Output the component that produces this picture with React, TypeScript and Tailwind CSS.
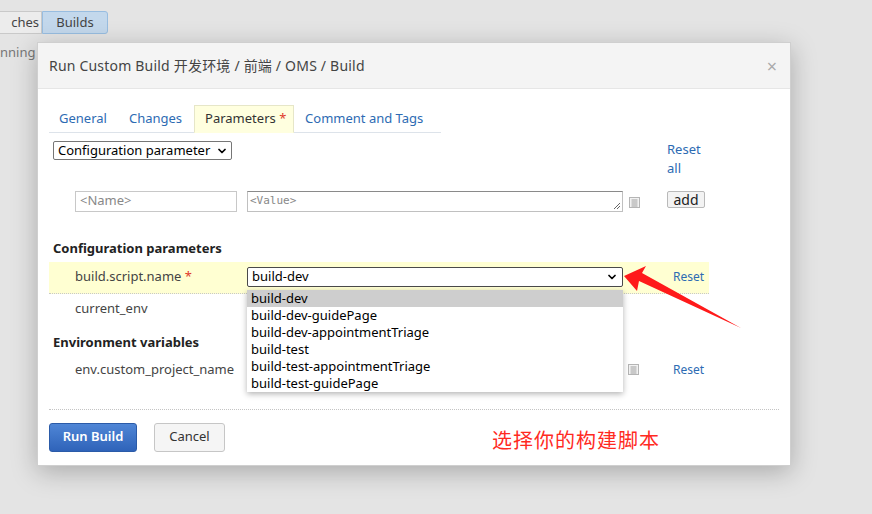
import { ChevronDown } from "lucide-react";

const font = {
  fontFamily: '"Noto Sans", "Noto Sans CJK SC", sans-serif',
};

function NoteIcon() {
  return (
    <svg width="11" height="11" viewBox="0 0 11 11" className="block">
      <rect x="0.5" y="0.5" width="10" height="10" fill="#f2f2f2" stroke="#b5b5b5" />
      <line x1="2.5" y1="3" x2="8.5" y2="3" stroke="#a0a0a0" />
      <line x1="2.5" y1="5" x2="8.5" y2="5" stroke="#a0a0a0" />
      <line x1="2.5" y1="7" x2="8.5" y2="7" stroke="#a0a0a0" />
      <line x1="2.5" y1="9" x2="8.5" y2="9" stroke="#a0a0a0" />
    </svg>
  );
}

const options = [
  "build-dev",
  "build-dev-guidePage",
  "build-dev-appointmentTriage",
  "build-test",
  "build-test-appointmentTriage",
  "build-test-guidePage",
];

export default function App() {
  return (
    <div
      className="relative w-[872px] h-[514px] overflow-hidden bg-[#e4e4e4] text-[13px] text-[#333]"
      style={font}
    >
      {/* page behind the overlay */}
      <div className="flex pt-[11px]">
        <div className="h-[23px] w-[42px] flex items-center justify-end pr-[2px] bg-[#ececec] border border-[#c9c9c9] border-l-0 text-[#444]">
          ches
        </div>
        <div className="h-[23px] w-[66px] flex items-center justify-center bg-[#c3d8ec] border border-[#98bde0] rounded-r-[3px] text-[#444]">
          Builds
        </div>
      </div>
      <div className="mt-[9px] text-[#777] whitespace-nowrap">nning c</div>

      {/* dialog */}
      <div className="absolute left-[37px] top-[42px] w-[754px] h-[424px] bg-white border border-[#cfcfcf] shadow-[0_6px_24px_rgba(0,0,0,0.25)] flex flex-col">
        <div className="h-[46px] shrink-0 bg-[#f4f4f4] border-b border-[#e6e6e6] flex items-center justify-between pl-[11px] pr-[13px]">
          <span className="text-[14px] text-[#444] tracking-[0.2px]">Run Custom Build 开发环境 / 前端 / OMS / Build</span>
          <span className="text-[18px] leading-none text-[#aaa]">×</span>
        </div>

        <div className="flex-1 flex flex-col px-[11px] pt-[16px]">
          {/* tabs */}
          <div className="flex items-end w-[392px] h-[28px] border-b border-[#dde3ea]">
            <div className="px-[10px] h-[27px] flex items-center text-[#2d6bb3] mr-[2px]">General</div>
            <div className="px-[10px] h-[27px] flex items-center text-[#2d6bb3] mr-[2px]">Changes</div>
            <div className="w-[100px] px-[10px] h-[28px] -mb-px flex items-center bg-[#ffffdf] border border-[#e6e6c8] border-b-[#ffffdf] text-[#333] mr-[1px]">
              Parameters&nbsp;<span className="text-[#e0392b]">*</span>
            </div>
            <div className="px-[10px] h-[27px] flex items-center text-[#2d6bb3]">Comment and Tags</div>
          </div>

          {/* add parameter block */}
          <div className="flex mt-[8px]">
            <div className="w-[618px] flex flex-col">
              <div className="pl-[4px]">
                <div className="inline-flex items-center h-[19px] w-[179px] border border-[#767676] rounded-[2px] pl-[4px] pr-[3px] text-[13px] text-black justify-between">
                  <span>Configuration parameter</span>
                  <ChevronDown size={12} strokeWidth={3.5} />
                </div>
              </div>
              <div className="flex items-center mt-[30px] pl-[26px]">
                <div className="w-[162px] h-[21px] border border-[#c8c8c8] px-[4px] flex items-center text-[#888] text-[13px]">
                  &lt;Name&gt;
                </div>
                <div className="ml-[10px] w-[376px] h-[21px] border border-[#c0c0c0] border-t-[#8a8a8a] pl-[2px] flex items-center text-[#888] text-[11px] relative" style={{ fontFamily: '"DejaVu Sans Mono", monospace' }}>
                  &lt;Value&gt;
                  <svg width="8" height="8" className="absolute right-[1px] bottom-[1px]" viewBox="0 0 8 8">
                    <line x1="1" y1="7" x2="7" y2="1" stroke="#666" />
                    <line x1="4" y1="7" x2="7" y2="4" stroke="#666" />
                  </svg>
                </div>
                <div className="ml-[6px] mt-[2px]">
                  <NoteIcon />
                </div>
              </div>
            </div>
            <div className="flex flex-col -mt-px">
              <a className="text-[#2d6bb3] leading-[19px] w-[40px]">Reset all</a>
              <div className="mt-[13px] h-[17px] w-[38px] flex items-center justify-center bg-[#f3f3f3] border border-[#b9b9b9] rounded-[2px] text-[14px] text-[#222] leading-none">
                add
              </div>
            </div>
          </div>

          {/* configuration parameters */}
          <div className="mt-[28px] font-bold text-[#222] pl-[4px] leading-[16px]">Configuration parameters</div>
          <div className="mt-[6px] w-[660px] h-[32px] shrink-0 bg-[#ffffd2] border-b border-dotted border-[#c8c8c8] flex items-center">
            <div className="w-[198px] pl-[26px] text-[#444]">
              build.script.name <span className="text-[#e0392b]">*</span>
            </div>
            <div className="relative w-[376px] h-[20px] border border-[#4a4a4a] rounded-[2px] bg-white flex items-center justify-between pl-[4px] pr-[4px] text-black">
              <span>build-dev</span>
              <ChevronDown size={12} strokeWidth={3.5} />
            </div>
            <a className="ml-[50px] text-[12px] text-[#2d6bb3]">Reset</a>
          </div>
          <div className="h-[30px] shrink-0 flex items-center">
            <div className="w-[198px] pl-[26px] text-[#444]">current_env</div>
          </div>

          <div className="mt-[10px] font-bold text-[#222] pl-[4px] leading-[16px]">Environment variables</div>
          <div className="mt-[5px] w-[660px] h-[30px] shrink-0 flex items-center">
            <div className="w-[198px] pl-[26px] text-[#444] whitespace-nowrap">env.custom_project_name</div>
            <div className="w-[376px]" />
            <div className="ml-[5px]">
              <NoteIcon />
            </div>
            <a className="ml-[34px] text-[12px] text-[#2d6bb3]">Reset</a>
          </div>

          <div className="mt-[24px] w-[730px] border-t border-dotted border-[#c4c4c4]" />
          <div className="flex items-center h-[29px] mt-[13px]">
            <div className="w-[88px] h-[29px] flex items-center justify-center rounded-[3px] border border-[#2b5ba8] bg-gradient-to-b from-[#4f86d6] to-[#2f63b9] text-white text-[13px] font-semibold">
              Run Build
            </div>
            <div className="ml-[17px] w-[71px] h-[29px] flex items-center justify-center rounded-[3px] border border-[#c6c6c6] bg-[#f5f5f5] text-[#333] text-[13px]">
              Cancel
            </div>
            <div className="ml-[267px] mt-[6px] leading-none text-[20px] text-[#ff2a1f] tracking-[1px]" style={{ fontFamily: '"Noto Sans CJK SC", sans-serif' }}>
              选择你的构建脚本
            </div>
          </div>
        </div>
      </div>

      {/* open dropdown list */}
      <div className="absolute left-[247px] top-[290px] w-[376px] bg-white shadow-[0_2px_6px_rgba(0,0,0,0.3)] text-black text-[13px]">
        {options.map((o, i) => (
          <div key={o} className={"h-[17px] leading-[17px] pl-[4px] " + (i === 0 ? "bg-[#cecece]" : "")}>
            {o}
          </div>
        ))}
      </div>

      {/* red annotation arrow */}
      <svg className="absolute left-0 top-0" width="872" height="514" viewBox="0 0 872 514">
        <polygon points="624,276 646,266 642,273 741,328 639,281 637,291" fill="#ff1a1a" />
      </svg>
    </div>
  );
}
